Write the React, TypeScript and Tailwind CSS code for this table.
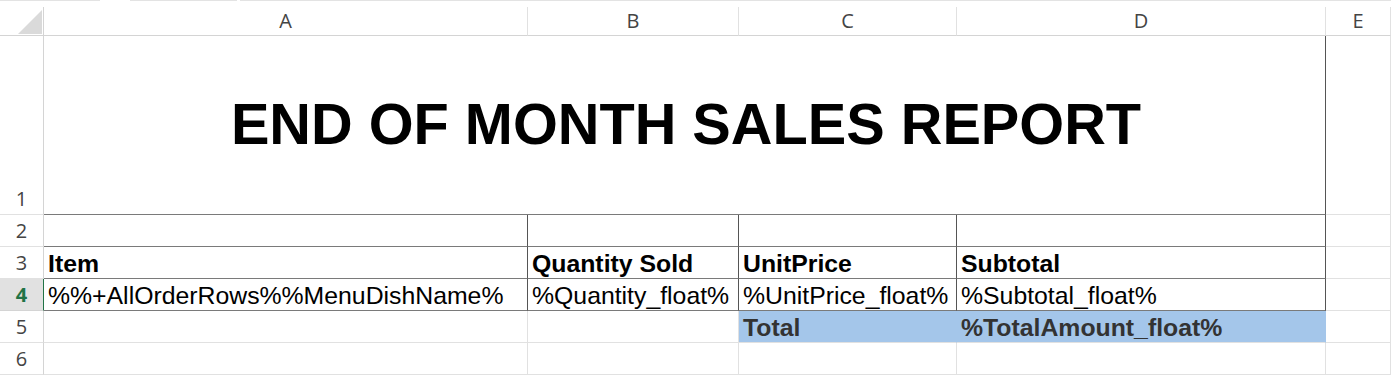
import React from "react";

const LIGHT = "border-[#e1e1e1]";

function RowHead({ n, active }: { n: number; active?: boolean }) {
  return (
    <div
      className={
        active
          ? "flex items-end justify-center bg-[#e1e1e1] border-b border-b-[#d4d4d4] border-r border-r-[#217346] text-[#217346] font-bold text-[20px] leading-[30px]"
          : "flex items-end justify-center bg-white border-b border-b-[#e1e1e1] border-r border-r-[#d4d4d4] text-[#444444] text-[20px] leading-[30px]"
      }
      style={{ fontFamily: '"Open Sans", "Noto Sans", sans-serif' }}
    >
      {n}
    </div>
  );
}

export default function App() {
  const cellFont = { fontFamily: '"Liberation Sans", Arial, sans-serif' };
  return (
    <div className="w-[1391px] h-[375px] bg-white overflow-hidden relative">
      {/* top strip */}
      <div className="flex h-[7px]">
        <div className="w-[100px] h-[1px] bg-[#e3e3e3]" />
        <div className="w-[30px] h-[1px]" />
        <div className="w-[107px] h-[1px] bg-[#e3e3e3]" />
        <div className="w-[3px] h-[1px]" />
        <div className="flex-1 h-[1px] bg-[#e3e3e3]" />
      </div>

      <div
        className="grid grid-cols-[44px_484px_211px_218px_369px_65px] grid-rows-[29px_179px_32px_32px_32px_32px_32px_32px]"
        style={cellFont}
      >
        {/* column headers */}
        <div className="relative border-b border-b-[#d4d4d4] border-r border-r-[#d4d4d4]">
          <svg className="absolute left-[18px] top-[3px]" width="24" height="24" viewBox="0 0 24 24">
            <polygon points="24,0 24,24 0,24" fill="#dadada" />
          </svg>
        </div>
        {["A", "B", "C", "D", "E"].map((c) => (
          <div
            key={c}
            className="flex items-center justify-center border-b border-b-[#d4d4d4] border-r border-r-[#e1e1e1] text-[20px] text-[#444444]"
            style={{ fontFamily: '"Open Sans", "Noto Sans", sans-serif' }}
          >
            {c}
          </div>
        ))}

        {/* row 1 */}
        <RowHead n={1} />
        <div className="col-span-4 flex items-center justify-center border-b border-b-[#7a7a7a] border-r border-r-[#555555]">
          <span className="text-[57.7px] font-bold text-black leading-none pl-[3px]">END OF MONTH SALES REPORT</span>
        </div>
        <div className={`border-b border-r ${LIGHT}`} />

        {/* row 2 */}
        <RowHead n={2} />
        <div className="border-b border-b-[#7a7a7a] border-r border-r-[#555555]" />
        <div className="border-b border-b-[#7a7a7a] border-r border-r-[#555555]" />
        <div className="border-b border-b-[#7a7a7a] border-r border-r-[#555555]" />
        <div className="border-b border-b-[#7a7a7a] border-r border-r-[#555555]" />
        <div className={`border-b border-r ${LIGHT}`} />

        {/* row 3 */}
        <RowHead n={3} />
        {["Item", "Quantity Sold", "UnitPrice", "Subtotal"].map((t) => (
          <div
            key={t}
            className="flex items-end pl-[4px] border-b border-b-[#7a7a7a] border-r border-r-[#555555] text-[24.8px] leading-[28px] font-bold text-black whitespace-nowrap overflow-hidden"
          >
            {t}
          </div>
        ))}
        <div className={`border-b border-r ${LIGHT}`} />

        {/* row 4 */}
        <RowHead n={4} active />
        {["%%+AllOrderRows%%MenuDishName%", "%Quantity_float%", "%UnitPrice_float%", "%Subtotal_float%"].map((t) => (
          <div
            key={t}
            className="flex items-end pl-[4px] border-b border-b-[#7a7a7a] border-r border-r-[#555555] text-[24.8px] leading-[28px] text-black whitespace-nowrap overflow-hidden"
          >
            {t}
          </div>
        ))}
        <div className={`border-b border-r ${LIGHT}`} />

        {/* row 5 */}
        <RowHead n={5} />
        <div className={`border-b border-r ${LIGHT}`} />
        <div className={`border-b border-r ${LIGHT}`} />
        <div className="flex items-end pl-[4px] bg-[#a4c6ea] border-b border-b-[#e1e1e1] border-r border-r-[#a4c6ea] text-[24.8px] leading-[28px] font-bold text-[#333333] whitespace-nowrap">
          Total
        </div>
        <div className="flex items-end pl-[4px] bg-[#a4c6ea] border-b border-b-[#e1e1e1] border-r border-r-[#a4c6ea] text-[24.8px] leading-[28px] font-bold text-[#333333] whitespace-nowrap">
          %TotalAmount_float%
        </div>
        <div className={`border-b border-r ${LIGHT}`} />

        {/* row 6 */}
        <RowHead n={6} />
        <div className={`border-b border-r ${LIGHT}`} />
        <div className={`border-b border-r ${LIGHT}`} />
        <div className={`border-b border-r ${LIGHT}`} />
        <div className={`border-b border-r ${LIGHT}`} />
        <div className={`border-b border-r ${LIGHT}`} />
      </div>
    </div>
  );
}
